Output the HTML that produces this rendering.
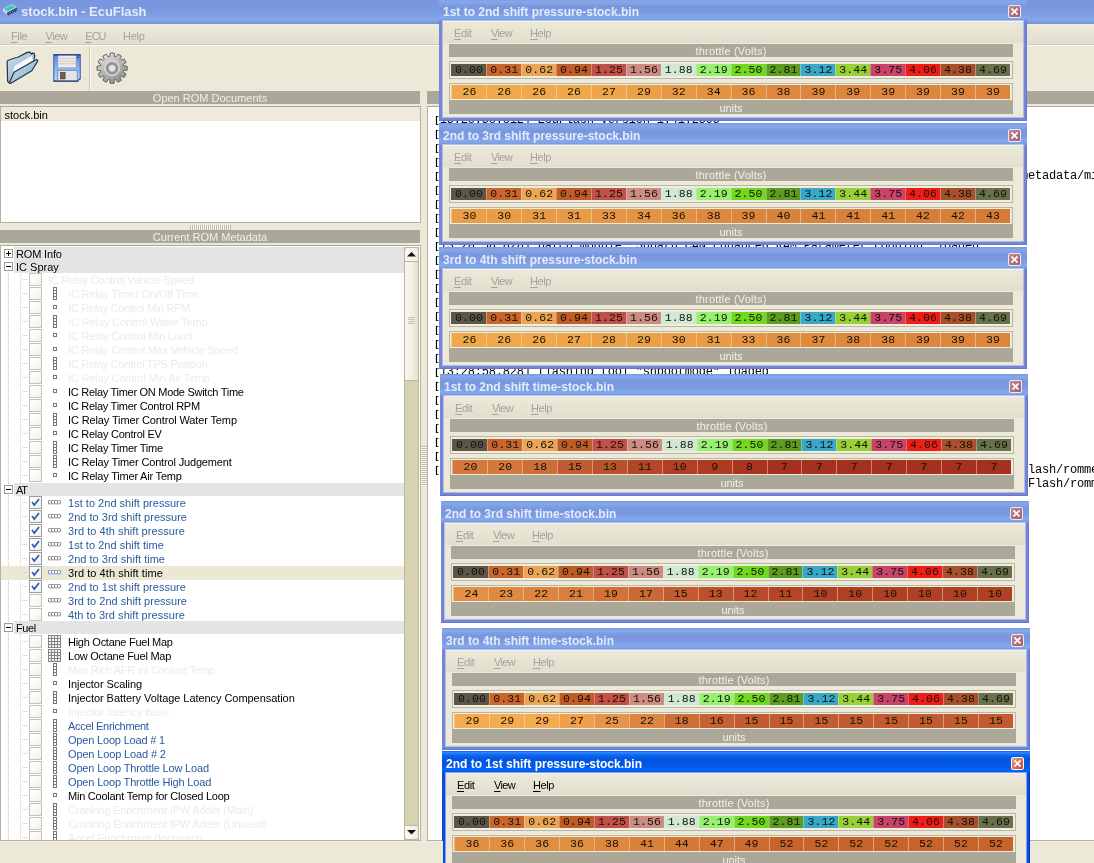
<!DOCTYPE html>
<html><head><meta charset="utf-8"><title>stock.bin - EcuFlash</title>
<style>
html,body{margin:0;padding:0;}
body{width:1094px;height:863px;overflow:hidden;position:relative;background:#ece9d8;font-family:"Liberation Sans",sans-serif;font-size:11px;color:#000;will-change:transform;transform:translateZ(0);}
div,span{position:absolute;box-sizing:border-box;white-space:nowrap;}
.t{line-height:14px;height:14px;}
.hdr{background:#aca899;color:#f1f0ea;text-align:center;font-size:11px;line-height:15px;height:13px;overflow:hidden;}
.mono{font-family:"Liberation Mono",monospace;font-size:11.5px;letter-spacing:0.1px;}
.log{font-family:"Liberation Mono",monospace;font-size:12px;letter-spacing:-0.2px;}
.br{font-style:normal;font-weight:bold;display:inline-block;width:6.8px;font-size:9px;letter-spacing:0;text-indent:1.2px;vertical-align:0.3px;}
/* tree */
.cat{left:14px;width:390px;height:12.5px;background:#e4e4e4;}
.cat span{left:2px;top:0;line-height:15px;height:13px;}
.pm{left:4px;width:9px;height:9px;border:1px solid #9c9c94;background:#fff;}
.pm i{position:absolute;left:1px;top:3px;width:5px;height:1px;background:#000;}
.pm b{position:absolute;left:3px;top:1px;width:1px;height:5px;background:#000;}
.cb{left:29px;width:13px;height:13px;border:1px solid #c6c3b2;background:linear-gradient(135deg,#fdfdfb 30%,#f1f0e8);}
.it{left:67px;line-height:14px;height:14px;}
.g{color:#ebebeb;}
.bl{color:#2a5aa0;}
.ic{left:48px;width:14px;height:14px;}
/* child windows */
.win{width:588px;height:121.5px;background:#7586d8;border-right:1px solid #6878cf;border-bottom:1px solid #6878cf;}
.win .tb{left:0;top:0;width:588px;height:22px;background:linear-gradient(180deg,#7697e7 0,#7c9ce3 4%,#86a6e6 9%,#88a8e6 13%,#80a2e4 20%,#7c9fe2 26%,#7996de 36%,#7b99e1 60%,#82a9e9 82%,#80a5e7 90%,#7b96e1 95%,#7a93df 100%);}
.win .ttl{left:4px;top:5px;font-weight:bold;font-size:12px;line-height:16px;color:#e3ebfa;}
.win .cl{left:4px;top:22px;width:580px;height:96px;background:#ece9d8;outline:1px solid rgba(225,231,250,0.55);}
.win .mb{left:0;top:0;width:580px;height:22px;background:linear-gradient(180deg,#ece9d8 0,#e1decd 100%);border-top:1px solid #f4f4f6;}
.win .mi{top:5px;line-height:14px;color:#a6a399;}
.win .mi u{text-decoration:underline;text-decoration-thickness:1px;text-underline-offset:1.5px;}
.win.act .mi{color:#000;}

.win .h1{left:6px;top:23px;width:564px;letter-spacing:0.2px;}
.win .h2{left:6px;top:79px;width:564px;height:14px;line-height:17px;}
.win .fr{left:6px;width:564px;border:1px solid #b9b6a6;background:#f0eddf;}
.win .c{top:2px;width:35px;height:12px;line-height:12px;text-align:center;color:#141008;overflow:hidden;}
.win .d{top:1px;height:14px;line-height:13px;border-left:1px solid rgba(255,235,200,0.45);}
.win .x{top:6px;width:13px;height:13px;border:1px solid #e8ecf8;border-radius:2px;background:linear-gradient(135deg,#c08a98,#a95a6c);}
.win.act{background:#0a4be0;border-color:#0838c0;}
.win.act .tb{background:linear-gradient(180deg,#0a5ee8 0,#2f86fb 6%,#1f78f6 12%,#0b62ea 22%,#0355e0 40%,#0358e6 70%,#0664f6 88%,#0459e8 95%,#0347d6 100%);}
.win.act .ttl{color:#fff;}
.win.act .x{background:linear-gradient(135deg,#e8a08c,#c8452c);border-color:#fff;}
</style></head><body>

<div style="left:0;top:0;width:1094px;height:24px;background:linear-gradient(180deg,#7896de 0,#7a98e0 30%,#7b9ae2 55%,#82a8e9 80%,#80a5e7 88%,#7b98e1 94%,#7a90d8 100%);"></div>
<svg style="position:absolute;left:0px;top:0px" width="20" height="20" viewBox="0 0 20 20">
<polygon points="2.8,8.8 7.2,12.4 7.2,13.8 2.8,10.2" fill="#e4e9ee"/>
<polygon points="7.2,12.4 17.2,7.3 17.2,8.7 7.2,13.8" fill="#39424e"/>
<polygon points="2.8,8.8 12,4 17.2,7.3 7.2,12.4" fill="#c2cfd4"/>
<polygon points="4.6,8.7 12,4.9 15.4,7.2 7.4,11.3" fill="#2fd0c8"/>
<path d="M7.7,14.7 L17,9.9" stroke="#131a30" stroke-width="1.9" stroke-dasharray="1.1 0.9"/>
<path d="M3.2,11 L6.6,13.8" stroke="#dfe5ea" stroke-width="1.2" stroke-dasharray="0.9 0.9"/>
</svg>
<span style="left:21px;top:3px;font-weight:bold;font-size:13px;line-height:17px;color:#e4ecfb;letter-spacing:-0.046px;" id="mt">stock.bin - EcuFlash</span>
<div style="left:0;top:24px;width:1094px;height:20px;background:linear-gradient(180deg,#f2f3ea 0,#ece9d9 6%,#e2dfcf 100%);"></div><div style="left:0;top:44px;width:1094px;height:1px;background:#cdcabb;"></div><div style="left:0;top:45px;width:1094px;height:1px;background:#fbfaf2;"></div>
<span id="m_File" class="t" style="left:11.0px;top:29px;color:#a5a296;letter-spacing:-0.388px;"><u style="text-decoration:underline;text-decoration-thickness:1px;text-underline-offset:1.5px">F</u>ile</span>
<span id="m_View" class="t" style="left:45.5px;top:29px;color:#a5a296;letter-spacing:-0.464px;"><u style="text-decoration:underline;text-decoration-thickness:1px;text-underline-offset:1.5px">V</u>iew</span>
<span id="m_ECU" class="t" style="left:85.3px;top:29px;color:#a5a296;letter-spacing:-1.011px;"><u style="text-decoration:underline;text-decoration-thickness:1px;text-underline-offset:1.5px">E</u>CU</span>
<span id="m_Help" class="t" style="left:122.9px;top:29px;color:#a5a296;letter-spacing:-0.206px;">Help</span>
<div style="left:0;top:46px;width:1094px;height:45px;background:#ece9d8;"></div>
<div style="left:89px;top:46px;width:1px;height:44px;background:#c9c6b5;"></div><div style="left:90px;top:46px;width:1px;height:44px;background:#fbfaf6;"></div>
<svg style="position:absolute;left:5px;top:50px" width="36" height="36" viewBox="5 50 36 36">
<defs><linearGradient id="fg" x1="0" y1="0" x2="1" y2="1"><stop offset="0" stop-color="#d4e6f4"/><stop offset="1" stop-color="#77a6cd"/></linearGradient>
<linearGradient id="fb" x1="0" y1="0" x2="1" y2="1"><stop offset="0" stop-color="#cfe2f0"/><stop offset="1" stop-color="#7fa8cb"/></linearGradient></defs>
<path d="M7.6,81.6 L7.2,61.6 Q7.3,60.5 8.3,60.2 L14.7,58 L17.4,57.5 L27.2,52.4 L30,52.2 L31.3,54 L32.7,53.1 L34.1,53.3 L34.8,55.9 L33.7,60.5 L12,80 L9.6,83 Z" fill="url(#fb)" stroke="#2b343c" stroke-width="1.2" stroke-linejoin="round"/>
<path d="M12.4,75.5 L14,66.1 L31.8,55.6 L33.7,60.5 L14,72.6 Z" fill="#f6f8fb" stroke="#b4bec8" stroke-width="0.5"/>
<path d="M9.3,83 L14,72.3 L36.4,59.4 Q37.6,59.6 37.8,61 L31.8,70.7 L10.5,83.4 Z" fill="url(#fg)" stroke="#2b343c" stroke-width="1.2" stroke-linejoin="round"/>
</svg>
<svg style="position:absolute;left:53px;top:54px" width="28" height="28" viewBox="0 0 28 28">
<defs><linearGradient id="fl" x1="0" y1="0" x2="0" y2="1"><stop offset="0" stop-color="#5f86df"/><stop offset="0.5" stop-color="#86b0ee"/><stop offset="1" stop-color="#b4d8f8"/></linearGradient></defs>
<path d="M0.7,0.7 H27.3 V24.8 L24.8,27.3 H0.7 Z" fill="url(#fl)" stroke="#4a68c4" stroke-width="1.1"/>
<path d="M0.7,27 H24.8 L27.3,24.6" fill="none" stroke="#20262e" stroke-width="1.2"/>
<path d="M0.5,0.9 H27.5" stroke="#343c9a" stroke-width="1.6"/>
<rect x="5" y="1.8" width="18" height="11.8" fill="#eceeee" stroke="#9aa4ba" stroke-width="0.5"/>
<path d="M5.5,4.6H22.5M5.5,7.2H22.5M5.5,9.8H22.5" stroke="#d8b7a8" stroke-width="0.8"/>
<rect x="4.8" y="16.4" width="19.4" height="10" fill="#e2e4ea" stroke="#5a6a8a" stroke-width="0.6"/>
<rect x="7.5" y="18.5" width="4.6" height="6.4" fill="#7a5a4c" stroke="#3a3038" stroke-width="0.6"/>
<rect x="24.4" y="2.4" width="1.4" height="2" fill="#24428a"/>
<polygon points="25,27.3 27.3,25 27.3,27.3" fill="#ece9d8"/>
</svg>
<svg style="position:absolute;left:95px;top:51px" width="34" height="34" viewBox="-0.1 -0.2 34 34">
<defs><linearGradient id="gg" x1="0.2" y1="0" x2="0.8" y2="1"><stop offset="0" stop-color="#e4e4e4"/><stop offset="0.5" stop-color="#b4b4b4"/><stop offset="1" stop-color="#8c8c8c"/></linearGradient></defs>
<path d="M32.07,15.02 L32.07,18.98 L28.46,19.37 L28.11,20.67 L31.04,22.82 L29.06,26.25 L25.74,24.78 L24.78,25.74 L26.25,29.06 L22.82,31.04 L20.67,28.11 L19.37,28.46 L18.98,32.07 L15.02,32.07 L14.63,28.46 L13.33,28.11 L11.18,31.04 L7.75,29.06 L9.22,25.74 L8.26,24.78 L4.94,26.25 L2.96,22.82 L5.89,20.67 L5.54,19.37 L1.93,18.98 L1.93,15.02 L5.54,14.63 L5.89,13.33 L2.96,11.18 L4.94,7.75 L8.26,9.22 L9.22,8.26 L7.75,4.94 L11.18,2.96 L13.33,5.89 L14.63,5.54 L15.02,1.93 L18.98,1.93 L19.37,5.54 L20.67,5.89 L22.82,2.96 L26.25,4.94 L24.78,8.26 L25.74,9.22 L29.06,7.75 L31.04,11.18 L28.11,13.33 L28.46,14.63 Z" fill="url(#gg)" stroke="#626262" stroke-width="1" stroke-linejoin="round"/>
<circle cx="17" cy="17" r="7.2" fill="#9c9c9c" stroke="#dadada" stroke-width="1.5"/>
<circle cx="17" cy="17" r="4.6" fill="none" stroke="#8c8c8c" stroke-width="1"/>
<circle cx="17" cy="17" r="3.3" fill="#e9e7dc" stroke="#c8c8c8" stroke-width="0.8"/>
</svg>
<div class="hdr" id="h_open" style="left:0;top:91px;width:420px;">Open ROM Documents</div>
<div style="left:0;top:106px;width:421px;height:117px;border:1px solid #b5b2a3;border-top-color:#aca899;background:#fff;"></div>
<div style="left:1px;top:107px;width:419px;height:14px;background:#eeebdb;"></div>
<span class="t" id="sb" style="left:4.5px;top:108px;">stock.bin</span>
<div style="left:190px;top:224.5px;width:41px;height:5px;background:repeating-linear-gradient(90deg,#bcb9a9 0,#bcb9a9 1px,#fbfaf6 1px,#fbfaf6 2px);"></div>
<div class="hdr" id="h_cur" style="left:0;top:230px;width:420px;">Current ROM Metadata</div>
<div style="left:0;top:245px;width:421px;height:596px;border:1px solid #b5b2a3;border-top-color:#aca899;background:#fff;overflow:hidden;" id="tree">
<div style="left:7px;top:27px;width:1px;height:570px;background:repeating-linear-gradient(180deg,#c4c4c4 0,#c4c4c4 1px,transparent 1px,transparent 2px);"></div>
<div style="left:19px;top:28px;width:1px;height:570px;background:repeating-linear-gradient(180deg,#cfcfcf 0,#cfcfcf 1px,transparent 1px,transparent 2px);"></div>
<div class="cat" style="left:13px;top:1.0px;"><span id="c0" style="letter-spacing:-0.160px;">ROM Info</span></div>
<div class="pm" style="left:3px;top:3px;"><i></i><b></b></div>
<div class="cat" style="left:13px;top:14.0px;"><span id="c1" style="">IC Spray</span></div>
<div class="pm" style="left:3px;top:16px;"><i></i></div>
<div style="left:21px;top:33px;width:5px;height:1px;background:repeating-linear-gradient(90deg,#c8c8c8 0,#c8c8c8 1px,transparent 1px,transparent 2px);"></div>
<div class="cb" style="left:28px;top:27px;"></div>
<span class="it g" id="a0" style="left:47px;top:27px;letter-spacing:-0.263px;">IC Relay Control Vehicle Speed</span>
<div style="left:21px;top:47px;width:5px;height:1px;background:repeating-linear-gradient(90deg,#c8c8c8 0,#c8c8c8 1px,transparent 1px,transparent 2px);"></div>
<div class="cb" style="left:28px;top:41px;"></div>
<svg class="ic" style="position:absolute;left:47px;top:41px" width="14" height="14"><g fill="#fff" stroke="#767676" stroke-width="1"><rect x="5.5" y="0.5" width="3" height="3"/><rect x="5.5" y="3.5" width="3" height="3"/><rect x="5.5" y="6.5" width="3" height="3"/><rect x="5.5" y="9.5" width="3" height="3"/></g></svg>
<span class="it g" id="a1" style="left:67px;top:41px;letter-spacing:-0.138px;">IC Relay Timer On/Off Time</span>
<div style="left:21px;top:61px;width:5px;height:1px;background:repeating-linear-gradient(90deg,#c8c8c8 0,#c8c8c8 1px,transparent 1px,transparent 2px);"></div>
<div class="cb" style="left:28px;top:55px;"></div>
<svg class="ic" style="position:absolute;left:47px;top:55px" width="14" height="14"><rect x="5.5" y="4.5" width="3" height="3" fill="#fff" stroke="#767676" stroke-width="1"/></svg>
<span class="it g" id="a2" style="left:67px;top:55px;letter-spacing:-0.283px;">IC Relay Control Min RPM</span>
<div style="left:21px;top:75px;width:5px;height:1px;background:repeating-linear-gradient(90deg,#c8c8c8 0,#c8c8c8 1px,transparent 1px,transparent 2px);"></div>
<div class="cb" style="left:28px;top:69px;"></div>
<svg class="ic" style="position:absolute;left:47px;top:69px" width="14" height="14"><g fill="#fff" stroke="#767676" stroke-width="1"><rect x="5.5" y="0.5" width="3" height="3"/><rect x="5.5" y="3.5" width="3" height="3"/><rect x="5.5" y="6.5" width="3" height="3"/><rect x="5.5" y="9.5" width="3" height="3"/></g></svg>
<span class="it g" id="a3" style="left:67px;top:69px;letter-spacing:-0.109px;">IC Relay Control Water Temp</span>
<div style="left:21px;top:89px;width:5px;height:1px;background:repeating-linear-gradient(90deg,#c8c8c8 0,#c8c8c8 1px,transparent 1px,transparent 2px);"></div>
<div class="cb" style="left:28px;top:83px;"></div>
<svg class="ic" style="position:absolute;left:47px;top:83px" width="14" height="14"><rect x="5.5" y="4.5" width="3" height="3" fill="#fff" stroke="#767676" stroke-width="1"/></svg>
<span class="it g" id="a4" style="left:67px;top:83px;letter-spacing:-0.217px;">IC Relay Control Min Load</span>
<div style="left:21px;top:103px;width:5px;height:1px;background:repeating-linear-gradient(90deg,#c8c8c8 0,#c8c8c8 1px,transparent 1px,transparent 2px);"></div>
<div class="cb" style="left:28px;top:97px;"></div>
<svg class="ic" style="position:absolute;left:47px;top:97px" width="14" height="14"><rect x="5.5" y="4.5" width="3" height="3" fill="#fff" stroke="#767676" stroke-width="1"/></svg>
<span class="it g" id="a5" style="left:67px;top:97px;letter-spacing:-0.233px;">IC Relay Control Max Vehicle Speed</span>
<div style="left:21px;top:117px;width:5px;height:1px;background:repeating-linear-gradient(90deg,#c8c8c8 0,#c8c8c8 1px,transparent 1px,transparent 2px);"></div>
<div class="cb" style="left:28px;top:111px;"></div>
<svg class="ic" style="position:absolute;left:47px;top:111px" width="14" height="14"><g fill="#fff" stroke="#767676" stroke-width="1"><rect x="5.5" y="0.5" width="3" height="3"/><rect x="5.5" y="3.5" width="3" height="3"/><rect x="5.5" y="6.5" width="3" height="3"/><rect x="5.5" y="9.5" width="3" height="3"/></g></svg>
<span class="it g" id="a6" style="left:67px;top:111px;letter-spacing:-0.263px;">IC Relay Control TPS Position</span>
<div style="left:21px;top:131px;width:5px;height:1px;background:repeating-linear-gradient(90deg,#c8c8c8 0,#c8c8c8 1px,transparent 1px,transparent 2px);"></div>
<div class="cb" style="left:28px;top:125px;"></div>
<svg class="ic" style="position:absolute;left:47px;top:125px" width="14" height="14"><rect x="5.5" y="4.5" width="3" height="3" fill="#fff" stroke="#767676" stroke-width="1"/></svg>
<span class="it g" id="a7" style="left:67px;top:125px;letter-spacing:-0.187px;">IC Relay Control Min Air Temp</span>
<div style="left:21px;top:145px;width:5px;height:1px;background:repeating-linear-gradient(90deg,#c8c8c8 0,#c8c8c8 1px,transparent 1px,transparent 2px);"></div>
<div class="cb" style="left:28px;top:139px;"></div>
<svg class="ic" style="position:absolute;left:47px;top:139px" width="14" height="14"><rect x="5.5" y="4.5" width="3" height="3" fill="#fff" stroke="#767676" stroke-width="1"/></svg>
<span class="it" id="a8" style="left:67px;top:139px;letter-spacing:-0.280px;">IC Relay Timer ON Mode Switch Time</span>
<div style="left:21px;top:159px;width:5px;height:1px;background:repeating-linear-gradient(90deg,#c8c8c8 0,#c8c8c8 1px,transparent 1px,transparent 2px);"></div>
<div class="cb" style="left:28px;top:153px;"></div>
<svg class="ic" style="position:absolute;left:47px;top:153px" width="14" height="14"><rect x="5.5" y="4.5" width="3" height="3" fill="#fff" stroke="#767676" stroke-width="1"/></svg>
<span class="it" id="a9" style="left:67px;top:153px;letter-spacing:-0.268px;">IC Relay Timer Control RPM</span>
<div style="left:21px;top:173px;width:5px;height:1px;background:repeating-linear-gradient(90deg,#c8c8c8 0,#c8c8c8 1px,transparent 1px,transparent 2px);"></div>
<div class="cb" style="left:28px;top:167px;"></div>
<svg class="ic" style="position:absolute;left:47px;top:167px" width="14" height="14"><g fill="#fff" stroke="#767676" stroke-width="1"><rect x="5.5" y="0.5" width="3" height="3"/><rect x="5.5" y="3.5" width="3" height="3"/><rect x="5.5" y="6.5" width="3" height="3"/><rect x="5.5" y="9.5" width="3" height="3"/></g></svg>
<span class="it" id="a10" style="left:67px;top:167px;letter-spacing:-0.124px;">IC Relay Timer Control Water Temp</span>
<div style="left:21px;top:187px;width:5px;height:1px;background:repeating-linear-gradient(90deg,#c8c8c8 0,#c8c8c8 1px,transparent 1px,transparent 2px);"></div>
<div class="cb" style="left:28px;top:181px;"></div>
<svg class="ic" style="position:absolute;left:47px;top:181px" width="14" height="14"><rect x="5.5" y="4.5" width="3" height="3" fill="#fff" stroke="#767676" stroke-width="1"/></svg>
<span class="it" id="a11" style="left:67px;top:181px;letter-spacing:-0.249px;">IC Relay Control EV</span>
<div style="left:21px;top:201px;width:5px;height:1px;background:repeating-linear-gradient(90deg,#c8c8c8 0,#c8c8c8 1px,transparent 1px,transparent 2px);"></div>
<div class="cb" style="left:28px;top:195px;"></div>
<svg class="ic" style="position:absolute;left:47px;top:195px" width="14" height="14"><g fill="#fff" stroke="#767676" stroke-width="1"><rect x="5.5" y="0.5" width="3" height="3"/><rect x="5.5" y="3.5" width="3" height="3"/><rect x="5.5" y="6.5" width="3" height="3"/><rect x="5.5" y="9.5" width="3" height="3"/></g></svg>
<span class="it" id="a12" style="left:67px;top:195px;letter-spacing:-0.255px;">IC Relay Timer Time</span>
<div style="left:21px;top:215px;width:5px;height:1px;background:repeating-linear-gradient(90deg,#c8c8c8 0,#c8c8c8 1px,transparent 1px,transparent 2px);"></div>
<div class="cb" style="left:28px;top:209px;"></div>
<svg class="ic" style="position:absolute;left:47px;top:209px" width="14" height="14"><g fill="#fff" stroke="#767676" stroke-width="1"><rect x="5.5" y="0.5" width="3" height="3"/><rect x="5.5" y="3.5" width="3" height="3"/><rect x="5.5" y="6.5" width="3" height="3"/><rect x="5.5" y="9.5" width="3" height="3"/></g></svg>
<span class="it" id="a13" style="left:67px;top:209px;letter-spacing:-0.160px;">IC Relay Timer Control Judgement</span>
<div style="left:21px;top:229px;width:5px;height:1px;background:repeating-linear-gradient(90deg,#c8c8c8 0,#c8c8c8 1px,transparent 1px,transparent 2px);"></div>
<div class="cb" style="left:28px;top:223px;"></div>
<svg class="ic" style="position:absolute;left:47px;top:223px" width="14" height="14"><rect x="5.5" y="4.5" width="3" height="3" fill="#fff" stroke="#767676" stroke-width="1"/></svg>
<span class="it" id="a14" style="left:67px;top:223px;letter-spacing:-0.204px;">IC Relay Timer Air Temp</span>
<div class="cat" style="left:13px;top:237.0px;"><span id="c2" style="letter-spacing:-1.175px;">AT</span></div>
<div class="pm" style="left:3px;top:239px;"><i></i></div>
<div style="left:21px;top:256px;width:5px;height:1px;background:repeating-linear-gradient(90deg,#c8c8c8 0,#c8c8c8 1px,transparent 1px,transparent 2px);"></div>
<div class="cb" style="left:28px;top:250px;border-color:#9b9b9b;"><svg style="position:absolute;left:1px;top:1px" width="9" height="9" viewBox="0 0 9 9"><path d="M1,4 L3.3,7 L8,1" fill="none" stroke="#2c5bb6" stroke-width="1.7"/></svg></div>
<svg class="ic" style="position:absolute;left:47px;top:250px" width="14" height="14"><g fill="#fff" stroke="#7e7e7e" stroke-width="1"><rect x="0.5" y="4.5" width="3" height="3.4" rx="0.8"/><rect x="3.5" y="4.5" width="3" height="3.4" rx="0.8"/><rect x="6.5" y="4.5" width="3" height="3.4" rx="0.8"/><rect x="9.5" y="4.5" width="3" height="3.4" rx="0.8"/></g></svg>
<span class="it bl" id="b0" style="left:67px;top:250px;letter-spacing:0.020px;">1st to 2nd shift pressure</span>
<div style="left:21px;top:270px;width:5px;height:1px;background:repeating-linear-gradient(90deg,#c8c8c8 0,#c8c8c8 1px,transparent 1px,transparent 2px);"></div>
<div class="cb" style="left:28px;top:264px;border-color:#9b9b9b;"><svg style="position:absolute;left:1px;top:1px" width="9" height="9" viewBox="0 0 9 9"><path d="M1,4 L3.3,7 L8,1" fill="none" stroke="#2c5bb6" stroke-width="1.7"/></svg></div>
<svg class="ic" style="position:absolute;left:47px;top:264px" width="14" height="14"><g fill="#fff" stroke="#7e7e7e" stroke-width="1"><rect x="0.5" y="4.5" width="3" height="3.4" rx="0.8"/><rect x="3.5" y="4.5" width="3" height="3.4" rx="0.8"/><rect x="6.5" y="4.5" width="3" height="3.4" rx="0.8"/><rect x="9.5" y="4.5" width="3" height="3.4" rx="0.8"/></g></svg>
<span class="it bl" id="b1" style="left:67px;top:264px;letter-spacing:0.015px;">2nd to 3rd shift pressure</span>
<div style="left:21px;top:284px;width:5px;height:1px;background:repeating-linear-gradient(90deg,#c8c8c8 0,#c8c8c8 1px,transparent 1px,transparent 2px);"></div>
<div class="cb" style="left:28px;top:278px;border-color:#9b9b9b;"><svg style="position:absolute;left:1px;top:1px" width="9" height="9" viewBox="0 0 9 9"><path d="M1,4 L3.3,7 L8,1" fill="none" stroke="#2c5bb6" stroke-width="1.7"/></svg></div>
<svg class="ic" style="position:absolute;left:47px;top:278px" width="14" height="14"><g fill="#fff" stroke="#7e7e7e" stroke-width="1"><rect x="0.5" y="4.5" width="3" height="3.4" rx="0.8"/><rect x="3.5" y="4.5" width="3" height="3.4" rx="0.8"/><rect x="6.5" y="4.5" width="3" height="3.4" rx="0.8"/><rect x="9.5" y="4.5" width="3" height="3.4" rx="0.8"/></g></svg>
<span class="it bl" id="b2" style="left:67px;top:278px;letter-spacing:0.050px;">3rd to 4th shift pressure</span>
<div style="left:21px;top:298px;width:5px;height:1px;background:repeating-linear-gradient(90deg,#c8c8c8 0,#c8c8c8 1px,transparent 1px,transparent 2px);"></div>
<div class="cb" style="left:28px;top:292px;border-color:#9b9b9b;"><svg style="position:absolute;left:1px;top:1px" width="9" height="9" viewBox="0 0 9 9"><path d="M1,4 L3.3,7 L8,1" fill="none" stroke="#2c5bb6" stroke-width="1.7"/></svg></div>
<svg class="ic" style="position:absolute;left:47px;top:292px" width="14" height="14"><g fill="#fff" stroke="#7e7e7e" stroke-width="1"><rect x="0.5" y="4.5" width="3" height="3.4" rx="0.8"/><rect x="3.5" y="4.5" width="3" height="3.4" rx="0.8"/><rect x="6.5" y="4.5" width="3" height="3.4" rx="0.8"/><rect x="9.5" y="4.5" width="3" height="3.4" rx="0.8"/></g></svg>
<span class="it bl" id="b3" style="left:67px;top:292px;letter-spacing:0.024px;">1st to 2nd shift time</span>
<div style="left:21px;top:312px;width:5px;height:1px;background:repeating-linear-gradient(90deg,#c8c8c8 0,#c8c8c8 1px,transparent 1px,transparent 2px);"></div>
<div class="cb" style="left:28px;top:306px;border-color:#9b9b9b;"><svg style="position:absolute;left:1px;top:1px" width="9" height="9" viewBox="0 0 9 9"><path d="M1,4 L3.3,7 L8,1" fill="none" stroke="#2c5bb6" stroke-width="1.7"/></svg></div>
<svg class="ic" style="position:absolute;left:47px;top:306px" width="14" height="14"><g fill="#fff" stroke="#7e7e7e" stroke-width="1"><rect x="0.5" y="4.5" width="3" height="3.4" rx="0.8"/><rect x="3.5" y="4.5" width="3" height="3.4" rx="0.8"/><rect x="6.5" y="4.5" width="3" height="3.4" rx="0.8"/><rect x="9.5" y="4.5" width="3" height="3.4" rx="0.8"/></g></svg>
<span class="it bl" id="b4" style="left:67px;top:306px;letter-spacing:0.019px;">2nd to 3rd shift time</span>
<div style="left:0px;top:320px;width:403px;height:14px;background:#ebe8d6;"></div>
<div style="left:21px;top:326px;width:5px;height:1px;background:repeating-linear-gradient(90deg,#c8c8c8 0,#c8c8c8 1px,transparent 1px,transparent 2px);"></div>
<div class="cb" style="left:28px;top:320px;border-color:#9b9b9b;"><svg style="position:absolute;left:1px;top:1px" width="9" height="9" viewBox="0 0 9 9"><path d="M1,4 L3.3,7 L8,1" fill="none" stroke="#2c5bb6" stroke-width="1.7"/></svg></div>
<svg class="ic" style="position:absolute;left:47px;top:320px" width="14" height="14"><g fill="#fff" stroke="#6f87c8" stroke-width="1"><rect x="0.5" y="4.5" width="3" height="3.4" rx="0.8"/><rect x="3.5" y="4.5" width="3" height="3.4" rx="0.8"/><rect x="6.5" y="4.5" width="3" height="3.4" rx="0.8"/><rect x="9.5" y="4.5" width="3" height="3.4" rx="0.8"/></g></svg>
<span class="it" id="b5" style="left:67px;top:320px;letter-spacing:0.060px;">3rd to 4th shift time</span>
<div style="left:21px;top:340px;width:5px;height:1px;background:repeating-linear-gradient(90deg,#c8c8c8 0,#c8c8c8 1px,transparent 1px,transparent 2px);"></div>
<div class="cb" style="left:28px;top:334px;border-color:#9b9b9b;"><svg style="position:absolute;left:1px;top:1px" width="9" height="9" viewBox="0 0 9 9"><path d="M1,4 L3.3,7 L8,1" fill="none" stroke="#2c5bb6" stroke-width="1.7"/></svg></div>
<svg class="ic" style="position:absolute;left:47px;top:334px" width="14" height="14"><g fill="#fff" stroke="#7e7e7e" stroke-width="1"><rect x="0.5" y="4.5" width="3" height="3.4" rx="0.8"/><rect x="3.5" y="4.5" width="3" height="3.4" rx="0.8"/><rect x="6.5" y="4.5" width="3" height="3.4" rx="0.8"/><rect x="9.5" y="4.5" width="3" height="3.4" rx="0.8"/></g></svg>
<span class="it bl" id="b6" style="left:67px;top:334px;letter-spacing:0.020px;">2nd to 1st shift pressure</span>
<div style="left:21px;top:354px;width:5px;height:1px;background:repeating-linear-gradient(90deg,#c8c8c8 0,#c8c8c8 1px,transparent 1px,transparent 2px);"></div>
<div class="cb" style="left:28px;top:348px;"></div>
<svg class="ic" style="position:absolute;left:47px;top:348px" width="14" height="14"><g fill="#fff" stroke="#7e7e7e" stroke-width="1"><rect x="0.5" y="4.5" width="3" height="3.4" rx="0.8"/><rect x="3.5" y="4.5" width="3" height="3.4" rx="0.8"/><rect x="6.5" y="4.5" width="3" height="3.4" rx="0.8"/><rect x="9.5" y="4.5" width="3" height="3.4" rx="0.8"/></g></svg>
<span class="it bl" id="b7" style="left:67px;top:348px;letter-spacing:0.015px;">3rd to 2nd shift pressure</span>
<div style="left:21px;top:368px;width:5px;height:1px;background:repeating-linear-gradient(90deg,#c8c8c8 0,#c8c8c8 1px,transparent 1px,transparent 2px);"></div>
<div class="cb" style="left:28px;top:362px;"></div>
<svg class="ic" style="position:absolute;left:47px;top:362px" width="14" height="14"><g fill="#fff" stroke="#7e7e7e" stroke-width="1"><rect x="0.5" y="4.5" width="3" height="3.4" rx="0.8"/><rect x="3.5" y="4.5" width="3" height="3.4" rx="0.8"/><rect x="6.5" y="4.5" width="3" height="3.4" rx="0.8"/><rect x="9.5" y="4.5" width="3" height="3.4" rx="0.8"/></g></svg>
<span class="it bl" id="b8" style="left:67px;top:362px;letter-spacing:0.050px;">4th to 3rd shift pressure</span>
<div class="cat" style="left:13px;top:375.0px;"><span id="c3" style="letter-spacing:-0.427px;">Fuel</span></div>
<div class="pm" style="left:3px;top:377px;"><i></i></div>
<div style="left:21px;top:395px;width:5px;height:1px;background:repeating-linear-gradient(90deg,#c8c8c8 0,#c8c8c8 1px,transparent 1px,transparent 2px);"></div>
<div class="cb" style="left:28px;top:389px;"></div>
<svg class="ic" style="position:absolute;left:47px;top:389px" width="14" height="14"><rect x="0.5" y="0.5" width="12" height="12" fill="#f6f6f6" stroke="#848484"/><path d="M3.5,0.5v12M6.5,0.5v12M9.5,0.5v12M0.5,3.5h12M0.5,6.5h12M0.5,9.5h12" stroke="#848484" stroke-width="1"/></svg>
<span class="it" id="f0" style="left:67px;top:389px;letter-spacing:-0.268px;">High Octane Fuel Map</span>
<div style="left:21px;top:409px;width:5px;height:1px;background:repeating-linear-gradient(90deg,#c8c8c8 0,#c8c8c8 1px,transparent 1px,transparent 2px);"></div>
<div class="cb" style="left:28px;top:403px;"></div>
<svg class="ic" style="position:absolute;left:47px;top:403px" width="14" height="14"><rect x="0.5" y="0.5" width="12" height="12" fill="#f6f6f6" stroke="#848484"/><path d="M3.5,0.5v12M6.5,0.5v12M9.5,0.5v12M0.5,3.5h12M0.5,6.5h12M0.5,9.5h12" stroke="#848484" stroke-width="1"/></svg>
<span class="it" id="f1" style="left:67px;top:403px;letter-spacing:-0.238px;">Low Octane Fuel Map</span>
<div style="left:21px;top:423px;width:5px;height:1px;background:repeating-linear-gradient(90deg,#c8c8c8 0,#c8c8c8 1px,transparent 1px,transparent 2px);"></div>
<div class="cb" style="left:28px;top:417px;"></div>
<svg class="ic" style="position:absolute;left:47px;top:417px" width="14" height="14"><g fill="#fff" stroke="#767676" stroke-width="1"><rect x="5.5" y="0.5" width="3" height="3"/><rect x="5.5" y="3.5" width="3" height="3"/><rect x="5.5" y="6.5" width="3" height="3"/><rect x="5.5" y="9.5" width="3" height="3"/></g></svg>
<span class="it g" id="f2" style="left:67px;top:417px;letter-spacing:-0.281px;">Max Rich AFR vs Coolant Temp</span>
<div style="left:21px;top:437px;width:5px;height:1px;background:repeating-linear-gradient(90deg,#c8c8c8 0,#c8c8c8 1px,transparent 1px,transparent 2px);"></div>
<div class="cb" style="left:28px;top:431px;"></div>
<svg class="ic" style="position:absolute;left:47px;top:431px" width="14" height="14"><rect x="5.5" y="4.5" width="3" height="3" fill="#fff" stroke="#767676" stroke-width="1"/></svg>
<span class="it" id="f3" style="left:67px;top:431px;letter-spacing:-0.076px;">Injector Scaling</span>
<div style="left:21px;top:451px;width:5px;height:1px;background:repeating-linear-gradient(90deg,#c8c8c8 0,#c8c8c8 1px,transparent 1px,transparent 2px);"></div>
<div class="cb" style="left:28px;top:445px;"></div>
<svg class="ic" style="position:absolute;left:47px;top:445px" width="14" height="14"><g fill="#fff" stroke="#767676" stroke-width="1"><rect x="5.5" y="0.5" width="3" height="3"/><rect x="5.5" y="3.5" width="3" height="3"/><rect x="5.5" y="6.5" width="3" height="3"/><rect x="5.5" y="9.5" width="3" height="3"/></g></svg>
<span class="it" id="f4" style="left:67px;top:445px;letter-spacing:-0.058px;">Injector Battery Voltage Latency Compensation</span>
<div style="left:21px;top:465px;width:5px;height:1px;background:repeating-linear-gradient(90deg,#c8c8c8 0,#c8c8c8 1px,transparent 1px,transparent 2px);"></div>
<div class="cb" style="left:28px;top:459px;"></div>
<svg class="ic" style="position:absolute;left:47px;top:459px" width="14" height="14"><rect x="5.5" y="4.5" width="3" height="3" fill="#fff" stroke="#767676" stroke-width="1"/></svg>
<span class="it g" id="f5" style="left:67px;top:459px;letter-spacing:0.039px;">Injector latency base</span>
<div style="left:21px;top:479px;width:5px;height:1px;background:repeating-linear-gradient(90deg,#c8c8c8 0,#c8c8c8 1px,transparent 1px,transparent 2px);"></div>
<div class="cb" style="left:28px;top:473px;"></div>
<svg class="ic" style="position:absolute;left:47px;top:473px" width="14" height="14"><g fill="#fff" stroke="#767676" stroke-width="1"><rect x="5.5" y="0.5" width="3" height="3"/><rect x="5.5" y="3.5" width="3" height="3"/><rect x="5.5" y="6.5" width="3" height="3"/><rect x="5.5" y="9.5" width="3" height="3"/></g></svg>
<span class="it bl" id="f6" style="left:67px;top:473px;letter-spacing:-0.312px;">Accel Enrichment</span>
<div style="left:21px;top:493px;width:5px;height:1px;background:repeating-linear-gradient(90deg,#c8c8c8 0,#c8c8c8 1px,transparent 1px,transparent 2px);"></div>
<div class="cb" style="left:28px;top:487px;"></div>
<svg class="ic" style="position:absolute;left:47px;top:487px" width="14" height="14"><g fill="#fff" stroke="#767676" stroke-width="1"><rect x="5.5" y="0.5" width="3" height="3"/><rect x="5.5" y="3.5" width="3" height="3"/><rect x="5.5" y="6.5" width="3" height="3"/><rect x="5.5" y="9.5" width="3" height="3"/></g></svg>
<span class="it bl" id="f7" style="left:67px;top:487px;letter-spacing:-0.184px;">Open Loop Load # 1</span>
<div style="left:21px;top:507px;width:5px;height:1px;background:repeating-linear-gradient(90deg,#c8c8c8 0,#c8c8c8 1px,transparent 1px,transparent 2px);"></div>
<div class="cb" style="left:28px;top:501px;"></div>
<svg class="ic" style="position:absolute;left:47px;top:501px" width="14" height="14"><g fill="#fff" stroke="#767676" stroke-width="1"><rect x="5.5" y="0.5" width="3" height="3"/><rect x="5.5" y="3.5" width="3" height="3"/><rect x="5.5" y="6.5" width="3" height="3"/><rect x="5.5" y="9.5" width="3" height="3"/></g></svg>
<span class="it bl" id="f8" style="left:67px;top:501px;letter-spacing:-0.140px;">Open Loop Load # 2</span>
<div style="left:21px;top:521px;width:5px;height:1px;background:repeating-linear-gradient(90deg,#c8c8c8 0,#c8c8c8 1px,transparent 1px,transparent 2px);"></div>
<div class="cb" style="left:28px;top:515px;"></div>
<svg class="ic" style="position:absolute;left:47px;top:515px" width="14" height="14"><g fill="#fff" stroke="#767676" stroke-width="1"><rect x="5.5" y="0.5" width="3" height="3"/><rect x="5.5" y="3.5" width="3" height="3"/><rect x="5.5" y="6.5" width="3" height="3"/><rect x="5.5" y="9.5" width="3" height="3"/></g></svg>
<span class="it bl" id="f9" style="left:67px;top:515px;letter-spacing:-0.165px;">Open Loop Throttle Low Load</span>
<div style="left:21px;top:535px;width:5px;height:1px;background:repeating-linear-gradient(90deg,#c8c8c8 0,#c8c8c8 1px,transparent 1px,transparent 2px);"></div>
<div class="cb" style="left:28px;top:529px;"></div>
<svg class="ic" style="position:absolute;left:47px;top:529px" width="14" height="14"><g fill="#fff" stroke="#767676" stroke-width="1"><rect x="5.5" y="0.5" width="3" height="3"/><rect x="5.5" y="3.5" width="3" height="3"/><rect x="5.5" y="6.5" width="3" height="3"/><rect x="5.5" y="9.5" width="3" height="3"/></g></svg>
<span class="it bl" id="f10" style="left:67px;top:529px;letter-spacing:-0.168px;">Open Loop Throttle High Load</span>
<div style="left:21px;top:549px;width:5px;height:1px;background:repeating-linear-gradient(90deg,#c8c8c8 0,#c8c8c8 1px,transparent 1px,transparent 2px);"></div>
<div class="cb" style="left:28px;top:543px;"></div>
<svg class="ic" style="position:absolute;left:47px;top:543px" width="14" height="14"><rect x="5.5" y="4.5" width="3" height="3" fill="#fff" stroke="#767676" stroke-width="1"/></svg>
<span class="it" id="f11" style="left:67px;top:543px;letter-spacing:-0.240px;">Min Coolant Temp for Closed Loop</span>
<div style="left:21px;top:563px;width:5px;height:1px;background:repeating-linear-gradient(90deg,#c8c8c8 0,#c8c8c8 1px,transparent 1px,transparent 2px);"></div>
<div class="cb" style="left:28px;top:557px;"></div>
<svg class="ic" style="position:absolute;left:47px;top:557px" width="14" height="14"><g fill="#fff" stroke="#767676" stroke-width="1"><rect x="5.5" y="0.5" width="3" height="3"/><rect x="5.5" y="3.5" width="3" height="3"/><rect x="5.5" y="6.5" width="3" height="3"/><rect x="5.5" y="9.5" width="3" height="3"/></g></svg>
<span class="it g" id="f12" style="left:67px;top:557px;letter-spacing:-0.202px;">Cranking Enrichment IPW Adder (Main)</span>
<div style="left:21px;top:577px;width:5px;height:1px;background:repeating-linear-gradient(90deg,#c8c8c8 0,#c8c8c8 1px,transparent 1px,transparent 2px);"></div>
<div class="cb" style="left:28px;top:571px;"></div>
<svg class="ic" style="position:absolute;left:47px;top:571px" width="14" height="14"><g fill="#fff" stroke="#767676" stroke-width="1"><rect x="5.5" y="0.5" width="3" height="3"/><rect x="5.5" y="3.5" width="3" height="3"/><rect x="5.5" y="6.5" width="3" height="3"/><rect x="5.5" y="9.5" width="3" height="3"/></g></svg>
<span class="it g" id="f13" style="left:67px;top:571px;letter-spacing:-0.201px;">Cranking Enrichment IPW Adder (Unused)</span>
<div style="left:21px;top:591px;width:5px;height:1px;background:repeating-linear-gradient(90deg,#c8c8c8 0,#c8c8c8 1px,transparent 1px,transparent 2px);"></div>
<div class="cb" style="left:28px;top:585px;"></div>
<svg class="ic" style="position:absolute;left:47px;top:585px" width="14" height="14"><g fill="#fff" stroke="#767676" stroke-width="1"><rect x="5.5" y="0.5" width="3" height="3"/><rect x="5.5" y="3.5" width="3" height="3"/><rect x="5.5" y="6.5" width="3" height="3"/><rect x="5.5" y="9.5" width="3" height="3"/></g></svg>
<span class="it g" id="f14" style="left:67px;top:585px;letter-spacing:-0.138px;">Accel Enrichment (Incorrect)</span>
<div style="left:403px;top:1px;width:15px;height:593px;background:#d6d2b2;border-left:1px solid #bdb99f;border-right:1px solid #bdb99f;"></div>
<div style="left:403px;top:15px;width:15px;height:120px;border:1px solid #b9b59a;background:linear-gradient(90deg,#f8f7ef 0,#f3f1e4 50%,#e4e1cd 100%);"></div>
<div style="left:407px;top:71px;width:7px;height:1px;background:#c9c5ac;"></div>
<div style="left:407px;top:73px;width:7px;height:1px;background:#c9c5ac;"></div>
<div style="left:407px;top:75px;width:7px;height:1px;background:#c9c5ac;"></div>
<div style="left:407px;top:77px;width:7px;height:1px;background:#c9c5ac;"></div>
<div style="left:403px;top:1px;width:15px;height:15px;border:1px solid #b9b59a;border-radius:3px 3px 0 0;background:linear-gradient(90deg,#fbfaf5,#efede0);"></div>
<svg style="position:absolute;left:406px;top:6px" width="9" height="5"><polygon points="0,4.5 4.5,0 9,4.5" fill="#111"/></svg>
<div style="left:403px;top:579px;width:15px;height:15px;border:1px solid #b9b59a;border-radius:0 0 3px 3px;background:linear-gradient(90deg,#fbfaf5,#efede0);"></div>
<svg style="position:absolute;left:406px;top:584px" width="9" height="5"><polygon points="0,0 9,0 4.5,4.5" fill="#111"/></svg>
</div>
<div class="hdr" style="left:427px;top:91px;width:667px;"></div>
<div style="left:427px;top:106px;width:680px;height:735px;border:1px solid #b5b2a3;border-top-color:#aca899;background:#fff;"></div>
<div style="left:421.5px;top:445.5px;width:5px;height:40px;background:repeating-linear-gradient(180deg,#bcb9a9 0,#bcb9a9 1px,#fbfaf6 1px,#fbfaf6 2px);"></div>
<span class="log" style="left:433px;top:113px;line-height:14px;height:14px;color:#000;"><i class="br">[</i>13:28:58.812] EcuFlash Version 1.41.2595</span>
<span class="log" style="left:433px;top:127px;line-height:14px;height:14px;color:#000;"><i class="br">[</i>13:28:58.812] OS Version Windows XP</span>
<span class="log" style="left:433px;top:141px;line-height:14px;height:14px;color:#000;"><i class="br">[</i>13:28:58.812] Qt Version 4.5.0</span>
<span class="log" style="left:433px;top:155px;line-height:14px;height:14px;color:#000;"><i class="br">[</i>13:28:58.812] 26 memory models read</span>
<span class="log" style="left:433px;top:169px;line-height:14px;height:14px;color:#000;"><i class="br">[</i>13:28:58.828] scanning for metadata models in C:/Program Files/OpenECU/EcuFlash/rommetadata/mitsubishi</span>
<span class="log" style="left:433px;top:183px;line-height:14px;height:14px;color:#000;"><i class="br">[</i>13:28:58.828] 408 ROM metadata models read</span>
<span class="log" style="left:433px;top:197px;line-height:14px;height:14px;color:#000;"><i class="br">[</i>13:28:58.828] checksum module &quot;subarudbw&quot; loaded</span>
<span class="log" style="left:433px;top:211px;line-height:14px;height:14px;color:#000;"><i class="br">[</i>13:28:58.828] checksum module &quot;subarudiesel&quot; loaded</span>
<span class="log" style="left:433px;top:225px;line-height:14px;height:14px;color:#000;"><i class="br">[</i>13:28:58.828] checksum module &quot;mitsucan&quot; loaded</span>
<span class="log" style="left:433px;top:239px;line-height:14px;height:14px;color:#000;"><i class="br">[</i>13:28:58.828] patch module &quot;Subaru CAN Enhanced RAM Parameter Logging&quot; loaded</span>
<span class="log" style="left:433px;top:253px;line-height:14px;height:14px;color:#000;"><i class="br">[</i>13:28:58.828] patch module &quot;Mitsu CAN RAM Parameter Logging&quot; loaded</span>
<span class="log" style="left:433px;top:267px;line-height:14px;height:14px;color:#000;"><i class="br">[</i>13:28:58.828] flashing tool &quot;wrx02&quot; loaded</span>
<span class="log" style="left:433px;top:281px;line-height:14px;height:14px;color:#000;"><i class="br">[</i>13:28:58.828] flashing tool &quot;wrx04&quot; loaded</span>
<span class="log" style="left:433px;top:295px;line-height:14px;height:14px;color:#000;"><i class="br">[</i>13:28:58.828] flashing tool &quot;sti04&quot; loaded</span>
<span class="log" style="left:433px;top:309px;line-height:14px;height:14px;color:#000;"><i class="br">[</i>13:28:58.828] flashing tool &quot;sti05&quot; loaded</span>
<span class="log" style="left:433px;top:323px;line-height:14px;height:14px;color:#000;"><i class="br">[</i>13:28:58.828] flashing tool &quot;mitsucan&quot; loaded</span>
<span class="log" style="left:433px;top:337px;line-height:14px;height:14px;color:#000;"><i class="br">[</i>13:28:58.828] flashing tool &quot;mitsukernel&quot; loaded</span>
<span class="log" style="left:433px;top:351px;line-height:14px;height:14px;color:#000;"><i class="br">[</i>13:28:58.828] flashing tool &quot;mitsukernelocp&quot; loaded</span>
<span class="log" style="left:433px;top:365px;line-height:14px;height:14px;color:#000;"><i class="br">[</i>13:28:58.828] flashing tool &quot;shbootmode&quot; loaded</span>
<span class="log" style="left:433px;top:379px;line-height:14px;height:14px;color:#000;"><i class="br">[</i>13:28:58.828] flashing tool &quot;shaudmode&quot; loaded</span>
<span class="log" style="left:433px;top:393px;line-height:14px;height:14px;color:#000;"><i class="br">[</i>13:28:58.828] flashing tool &quot;subarucan&quot; loaded</span>
<span class="log" style="left:433px;top:407px;line-height:14px;height:14px;color:#000;"><i class="br">[</i>13:28:58.828] flashing tool &quot;subarucand&quot; loaded</span>
<span class="log" style="left:433px;top:421px;line-height:14px;height:14px;color:#000;"><i class="br">[</i>13:28:58.828] flashing tool &quot;subarubrz&quot; loaded</span>
<span class="log" style="left:433px;top:435px;line-height:14px;height:14px;color:#000;"><i class="br">[</i>13:28:58.843] flashing tool &quot;subaruhitachi&quot; loaded</span>
<span class="log" style="left:433px;top:449px;line-height:14px;height:14px;color:#000;"><i class="br">[</i>13:28:58.843] J2534 API Version: 04.04</span>
<span class="log" style="left:433px;top:463px;line-height:14px;height:14px;color:#000;"><i class="br">[</i>13:28:58.843] using metadata XML ID 88590015 from file C:/Program Files/OpenECU/EcuFlash/rommetadata/mitsubishi/evo/88590015.xml</span>
<span class="log" style="left:433px;top:477px;line-height:14px;height:14px;color:#000;">&nbsp;13:28:58.843] using metadata XML ID evo7_base from file C:/Program Files/OpenECU/EcuFlash/rommetadata/mitsubishi/evo/evo7base.xml</span>
<div class="win" style="left:439px;top:-1px;">
<div class="tb"></div><span class="ttl" id="w0" style="">1st to 2nd shift pressure-stock.bin</span>
<div class="x" style="left:569px;"><svg style="position:absolute;left:2px;top:2px" width="7" height="7" viewBox="0 0 7 7"><path d="M0.5,0.5L6.5,6.5M6.5,0.5L0.5,6.5" stroke="#fff" stroke-width="1.7"/></svg></div>
<div class="cl"><div class="mb"></div>
<span class="mi" style="left:11px;letter-spacing:-0.35px"><u>E</u>dit</span><span class="mi" style="left:48px;letter-spacing:-0.65px"><u>V</u>iew</span><span class="mi" style="left:87px;letter-spacing:-0.4px"><u>H</u>elp</span>
<div class="hdr h1">throttle (Volts)</div>
<div class="fr" style="top:40px;height:18px;">
<span class="c mono" style="left:1.4px;background:#5c5648;">0.00</span>
<span class="c mono" style="left:36.3px;background:#c8662e;border-left:1px solid rgba(240,237,223,0.35);">0.31</span>
<span class="c mono" style="left:71.2px;background:#eba556;border-left:1px solid rgba(240,237,223,0.35);">0.62</span>
<span class="c mono" style="left:106.1px;background:#c05c28;border-left:1px solid rgba(240,237,223,0.35);">0.94</span>
<span class="c mono" style="left:141.0px;background:#c05048;border-left:1px solid rgba(240,237,223,0.35);">1.25</span>
<span class="c mono" style="left:175.9px;background:#cc8c84;border-left:1px solid rgba(240,237,223,0.35);">1.56</span>
<span class="c mono" style="left:210.8px;background:#d0e8d4;border-left:1px solid rgba(240,237,223,0.35);">1.88</span>
<span class="c mono" style="left:245.7px;background:#98f070;border-left:1px solid rgba(240,237,223,0.35);">2.19</span>
<span class="c mono" style="left:280.6px;background:#70d820;border-left:1px solid rgba(240,237,223,0.35);">2.50</span>
<span class="c mono" style="left:315.5px;background:#5c9c20;border-left:1px solid rgba(240,237,223,0.35);">2.81</span>
<span class="c mono" style="left:350.4px;background:#38a8c8;border-left:1px solid rgba(240,237,223,0.35);">3.12</span>
<span class="c mono" style="left:385.3px;background:#98d038;border-left:1px solid rgba(240,237,223,0.35);">3.44</span>
<span class="c mono" style="left:420.2px;background:#c84468;border-left:1px solid rgba(240,237,223,0.35);">3.75</span>
<span class="c mono" style="left:455.1px;background:#f01c18;border-left:1px solid rgba(240,237,223,0.35);">4.06</span>
<span class="c mono" style="left:490.0px;background:#a8502c;border-left:1px solid rgba(240,237,223,0.35);">4.38</span>
<span class="c mono" style="left:524.9px;background:#68704c;border-left:1px solid rgba(240,237,223,0.35);">4.69</span>
</div>
<div class="fr" style="top:62px;height:17px;border-bottom:none;">
<span class="c d mono" style="left:1.4px;background:#f0a84c;">26</span>
<span class="c d mono" style="left:36.3px;background:#f0a84c;">26</span>
<span class="c d mono" style="left:71.2px;background:#f0a84c;">26</span>
<span class="c d mono" style="left:106.1px;background:#f0a84c;">26</span>
<span class="c d mono" style="left:141.0px;background:#eea54a;">27</span>
<span class="c d mono" style="left:175.9px;background:#eba048;">29</span>
<span class="c d mono" style="left:210.8px;background:#e69844;">32</span>
<span class="c d mono" style="left:245.7px;background:#e39342;">34</span>
<span class="c d mono" style="left:280.6px;background:#e08e40;">36</span>
<span class="c d mono" style="left:315.5px;background:#dd883d;">38</span>
<span class="c d mono" style="left:350.4px;background:#db863c;">39</span>
<span class="c d mono" style="left:385.3px;background:#db863c;">39</span>
<span class="c d mono" style="left:420.2px;background:#db863c;">39</span>
<span class="c d mono" style="left:455.1px;background:#db863c;">39</span>
<span class="c d mono" style="left:490.0px;background:#db863c;">39</span>
<span class="c d mono" style="left:524.9px;background:#db863c;">39</span>
</div>
<div class="hdr h2">units</div>
</div></div>
<div class="win" style="left:439px;top:123px;">
<div class="tb"></div><span class="ttl" id="w1" style="">2nd to 3rd shift pressure-stock.bin</span>
<div class="x" style="left:569px;"><svg style="position:absolute;left:2px;top:2px" width="7" height="7" viewBox="0 0 7 7"><path d="M0.5,0.5L6.5,6.5M6.5,0.5L0.5,6.5" stroke="#fff" stroke-width="1.7"/></svg></div>
<div class="cl"><div class="mb"></div>
<span class="mi" style="left:11px;letter-spacing:-0.35px"><u>E</u>dit</span><span class="mi" style="left:48px;letter-spacing:-0.65px"><u>V</u>iew</span><span class="mi" style="left:87px;letter-spacing:-0.4px"><u>H</u>elp</span>
<div class="hdr h1">throttle (Volts)</div>
<div class="fr" style="top:40px;height:18px;">
<span class="c mono" style="left:1.4px;background:#5c5648;">0.00</span>
<span class="c mono" style="left:36.3px;background:#c8662e;border-left:1px solid rgba(240,237,223,0.35);">0.31</span>
<span class="c mono" style="left:71.2px;background:#eba556;border-left:1px solid rgba(240,237,223,0.35);">0.62</span>
<span class="c mono" style="left:106.1px;background:#c05c28;border-left:1px solid rgba(240,237,223,0.35);">0.94</span>
<span class="c mono" style="left:141.0px;background:#c05048;border-left:1px solid rgba(240,237,223,0.35);">1.25</span>
<span class="c mono" style="left:175.9px;background:#cc8c84;border-left:1px solid rgba(240,237,223,0.35);">1.56</span>
<span class="c mono" style="left:210.8px;background:#d0e8d4;border-left:1px solid rgba(240,237,223,0.35);">1.88</span>
<span class="c mono" style="left:245.7px;background:#98f070;border-left:1px solid rgba(240,237,223,0.35);">2.19</span>
<span class="c mono" style="left:280.6px;background:#70d820;border-left:1px solid rgba(240,237,223,0.35);">2.50</span>
<span class="c mono" style="left:315.5px;background:#5c9c20;border-left:1px solid rgba(240,237,223,0.35);">2.81</span>
<span class="c mono" style="left:350.4px;background:#38a8c8;border-left:1px solid rgba(240,237,223,0.35);">3.12</span>
<span class="c mono" style="left:385.3px;background:#98d038;border-left:1px solid rgba(240,237,223,0.35);">3.44</span>
<span class="c mono" style="left:420.2px;background:#c84468;border-left:1px solid rgba(240,237,223,0.35);">3.75</span>
<span class="c mono" style="left:455.1px;background:#f01c18;border-left:1px solid rgba(240,237,223,0.35);">4.06</span>
<span class="c mono" style="left:490.0px;background:#a8502c;border-left:1px solid rgba(240,237,223,0.35);">4.38</span>
<span class="c mono" style="left:524.9px;background:#68704c;border-left:1px solid rgba(240,237,223,0.35);">4.69</span>
</div>
<div class="fr" style="top:62px;height:17px;border-bottom:none;">
<span class="c d mono" style="left:1.4px;background:#e99d47;">30</span>
<span class="c d mono" style="left:36.3px;background:#e99d47;">30</span>
<span class="c d mono" style="left:71.2px;background:#e89b46;">31</span>
<span class="c d mono" style="left:106.1px;background:#e89b46;">31</span>
<span class="c d mono" style="left:141.0px;background:#e59543;">33</span>
<span class="c d mono" style="left:175.9px;background:#e39342;">34</span>
<span class="c d mono" style="left:210.8px;background:#e08e40;">36</span>
<span class="c d mono" style="left:245.7px;background:#dd883d;">38</span>
<span class="c d mono" style="left:280.6px;background:#db863c;">39</span>
<span class="c d mono" style="left:315.5px;background:#da833b;">40</span>
<span class="c d mono" style="left:350.4px;background:#d8813a;">41</span>
<span class="c d mono" style="left:385.3px;background:#d8813a;">41</span>
<span class="c d mono" style="left:420.2px;background:#d8813a;">41</span>
<span class="c d mono" style="left:455.1px;background:#d77e38;">42</span>
<span class="c d mono" style="left:490.0px;background:#d77e38;">42</span>
<span class="c d mono" style="left:524.9px;background:#d57b37;">43</span>
</div>
<div class="hdr h2">units</div>
</div></div>
<div class="win" style="left:439px;top:247px;">
<div class="tb"></div><span class="ttl" id="w2" style="">3rd to 4th shift pressure-stock.bin</span>
<div class="x" style="left:569px;"><svg style="position:absolute;left:2px;top:2px" width="7" height="7" viewBox="0 0 7 7"><path d="M0.5,0.5L6.5,6.5M6.5,0.5L0.5,6.5" stroke="#fff" stroke-width="1.7"/></svg></div>
<div class="cl"><div class="mb"></div>
<span class="mi" style="left:11px;letter-spacing:-0.35px"><u>E</u>dit</span><span class="mi" style="left:48px;letter-spacing:-0.65px"><u>V</u>iew</span><span class="mi" style="left:87px;letter-spacing:-0.4px"><u>H</u>elp</span>
<div class="hdr h1">throttle (Volts)</div>
<div class="fr" style="top:40px;height:18px;">
<span class="c mono" style="left:1.4px;background:#5c5648;">0.00</span>
<span class="c mono" style="left:36.3px;background:#c8662e;border-left:1px solid rgba(240,237,223,0.35);">0.31</span>
<span class="c mono" style="left:71.2px;background:#eba556;border-left:1px solid rgba(240,237,223,0.35);">0.62</span>
<span class="c mono" style="left:106.1px;background:#c05c28;border-left:1px solid rgba(240,237,223,0.35);">0.94</span>
<span class="c mono" style="left:141.0px;background:#c05048;border-left:1px solid rgba(240,237,223,0.35);">1.25</span>
<span class="c mono" style="left:175.9px;background:#cc8c84;border-left:1px solid rgba(240,237,223,0.35);">1.56</span>
<span class="c mono" style="left:210.8px;background:#d0e8d4;border-left:1px solid rgba(240,237,223,0.35);">1.88</span>
<span class="c mono" style="left:245.7px;background:#98f070;border-left:1px solid rgba(240,237,223,0.35);">2.19</span>
<span class="c mono" style="left:280.6px;background:#70d820;border-left:1px solid rgba(240,237,223,0.35);">2.50</span>
<span class="c mono" style="left:315.5px;background:#5c9c20;border-left:1px solid rgba(240,237,223,0.35);">2.81</span>
<span class="c mono" style="left:350.4px;background:#38a8c8;border-left:1px solid rgba(240,237,223,0.35);">3.12</span>
<span class="c mono" style="left:385.3px;background:#98d038;border-left:1px solid rgba(240,237,223,0.35);">3.44</span>
<span class="c mono" style="left:420.2px;background:#c84468;border-left:1px solid rgba(240,237,223,0.35);">3.75</span>
<span class="c mono" style="left:455.1px;background:#f01c18;border-left:1px solid rgba(240,237,223,0.35);">4.06</span>
<span class="c mono" style="left:490.0px;background:#a8502c;border-left:1px solid rgba(240,237,223,0.35);">4.38</span>
<span class="c mono" style="left:524.9px;background:#68704c;border-left:1px solid rgba(240,237,223,0.35);">4.69</span>
</div>
<div class="fr" style="top:62px;height:17px;border-bottom:none;">
<span class="c d mono" style="left:1.4px;background:#f0a84c;">26</span>
<span class="c d mono" style="left:36.3px;background:#f0a84c;">26</span>
<span class="c d mono" style="left:71.2px;background:#f0a84c;">26</span>
<span class="c d mono" style="left:106.1px;background:#eea54a;">27</span>
<span class="c d mono" style="left:141.0px;background:#eca249;">28</span>
<span class="c d mono" style="left:175.9px;background:#eba048;">29</span>
<span class="c d mono" style="left:210.8px;background:#e99d47;">30</span>
<span class="c d mono" style="left:245.7px;background:#e89b46;">31</span>
<span class="c d mono" style="left:280.6px;background:#e59543;">33</span>
<span class="c d mono" style="left:315.5px;background:#e08e40;">36</span>
<span class="c d mono" style="left:350.4px;background:#df8b3e;">37</span>
<span class="c d mono" style="left:385.3px;background:#dd883d;">38</span>
<span class="c d mono" style="left:420.2px;background:#dd883d;">38</span>
<span class="c d mono" style="left:455.1px;background:#db863c;">39</span>
<span class="c d mono" style="left:490.0px;background:#db863c;">39</span>
<span class="c d mono" style="left:524.9px;background:#db863c;">39</span>
</div>
<div class="hdr h2">units</div>
</div></div>
<div class="win" style="left:440px;top:374px;">
<div class="tb"></div><span class="ttl" id="w3" style="">1st to 2nd shift time-stock.bin</span>
<div class="x" style="left:569px;"><svg style="position:absolute;left:2px;top:2px" width="7" height="7" viewBox="0 0 7 7"><path d="M0.5,0.5L6.5,6.5M6.5,0.5L0.5,6.5" stroke="#fff" stroke-width="1.7"/></svg></div>
<div class="cl"><div class="mb"></div>
<span class="mi" style="left:11px;letter-spacing:-0.35px"><u>E</u>dit</span><span class="mi" style="left:48px;letter-spacing:-0.65px"><u>V</u>iew</span><span class="mi" style="left:87px;letter-spacing:-0.4px"><u>H</u>elp</span>
<div class="hdr h1">throttle (Volts)</div>
<div class="fr" style="top:40px;height:18px;">
<span class="c mono" style="left:1.4px;background:#5c5648;">0.00</span>
<span class="c mono" style="left:36.3px;background:#c8662e;border-left:1px solid rgba(240,237,223,0.35);">0.31</span>
<span class="c mono" style="left:71.2px;background:#eba556;border-left:1px solid rgba(240,237,223,0.35);">0.62</span>
<span class="c mono" style="left:106.1px;background:#c05c28;border-left:1px solid rgba(240,237,223,0.35);">0.94</span>
<span class="c mono" style="left:141.0px;background:#c05048;border-left:1px solid rgba(240,237,223,0.35);">1.25</span>
<span class="c mono" style="left:175.9px;background:#cc8c84;border-left:1px solid rgba(240,237,223,0.35);">1.56</span>
<span class="c mono" style="left:210.8px;background:#d0e8d4;border-left:1px solid rgba(240,237,223,0.35);">1.88</span>
<span class="c mono" style="left:245.7px;background:#98f070;border-left:1px solid rgba(240,237,223,0.35);">2.19</span>
<span class="c mono" style="left:280.6px;background:#70d820;border-left:1px solid rgba(240,237,223,0.35);">2.50</span>
<span class="c mono" style="left:315.5px;background:#5c9c20;border-left:1px solid rgba(240,237,223,0.35);">2.81</span>
<span class="c mono" style="left:350.4px;background:#38a8c8;border-left:1px solid rgba(240,237,223,0.35);">3.12</span>
<span class="c mono" style="left:385.3px;background:#98d038;border-left:1px solid rgba(240,237,223,0.35);">3.44</span>
<span class="c mono" style="left:420.2px;background:#c84468;border-left:1px solid rgba(240,237,223,0.35);">3.75</span>
<span class="c mono" style="left:455.1px;background:#f01c18;border-left:1px solid rgba(240,237,223,0.35);">4.06</span>
<span class="c mono" style="left:490.0px;background:#a8502c;border-left:1px solid rgba(240,237,223,0.35);">4.38</span>
<span class="c mono" style="left:524.9px;background:#68704c;border-left:1px solid rgba(240,237,223,0.35);">4.69</span>
</div>
<div class="fr" style="top:62px;height:17px;border-bottom:none;">
<span class="c d mono" style="left:1.4px;background:#d4783b;">20</span>
<span class="c d mono" style="left:36.3px;background:#d4783b;">20</span>
<span class="c d mono" style="left:71.2px;background:#cd6d37;">18</span>
<span class="c d mono" style="left:106.1px;background:#c25c30;">15</span>
<span class="c d mono" style="left:141.0px;background:#bb512b;">13</span>
<span class="c d mono" style="left:175.9px;background:#b44627;">11</span>
<span class="c d mono" style="left:210.8px;background:#b04024;">10</span>
<span class="c d mono" style="left:245.7px;background:#ad3b22;">9</span>
<span class="c d mono" style="left:280.6px;background:#a93520;">8</span>
<span class="c d mono" style="left:315.5px;background:#a6301e;">7</span>
<span class="c d mono" style="left:350.4px;background:#a6301e;">7</span>
<span class="c d mono" style="left:385.3px;background:#a6301e;">7</span>
<span class="c d mono" style="left:420.2px;background:#a6301e;">7</span>
<span class="c d mono" style="left:455.1px;background:#a6301e;">7</span>
<span class="c d mono" style="left:490.0px;background:#a6301e;">7</span>
<span class="c d mono" style="left:524.9px;background:#a6301e;">7</span>
</div>
<div class="hdr h2">units</div>
</div></div>
<div class="win" style="left:441px;top:501px;">
<div class="tb"></div><span class="ttl" id="w4" style="">2nd to 3rd shift time-stock.bin</span>
<div class="x" style="left:569px;"><svg style="position:absolute;left:2px;top:2px" width="7" height="7" viewBox="0 0 7 7"><path d="M0.5,0.5L6.5,6.5M6.5,0.5L0.5,6.5" stroke="#fff" stroke-width="1.7"/></svg></div>
<div class="cl"><div class="mb"></div>
<span class="mi" style="left:11px;letter-spacing:-0.35px"><u>E</u>dit</span><span class="mi" style="left:48px;letter-spacing:-0.65px"><u>V</u>iew</span><span class="mi" style="left:87px;letter-spacing:-0.4px"><u>H</u>elp</span>
<div class="hdr h1">throttle (Volts)</div>
<div class="fr" style="top:40px;height:18px;">
<span class="c mono" style="left:1.4px;background:#5c5648;">0.00</span>
<span class="c mono" style="left:36.3px;background:#c8662e;border-left:1px solid rgba(240,237,223,0.35);">0.31</span>
<span class="c mono" style="left:71.2px;background:#eba556;border-left:1px solid rgba(240,237,223,0.35);">0.62</span>
<span class="c mono" style="left:106.1px;background:#c05c28;border-left:1px solid rgba(240,237,223,0.35);">0.94</span>
<span class="c mono" style="left:141.0px;background:#c05048;border-left:1px solid rgba(240,237,223,0.35);">1.25</span>
<span class="c mono" style="left:175.9px;background:#cc8c84;border-left:1px solid rgba(240,237,223,0.35);">1.56</span>
<span class="c mono" style="left:210.8px;background:#d0e8d4;border-left:1px solid rgba(240,237,223,0.35);">1.88</span>
<span class="c mono" style="left:245.7px;background:#98f070;border-left:1px solid rgba(240,237,223,0.35);">2.19</span>
<span class="c mono" style="left:280.6px;background:#70d820;border-left:1px solid rgba(240,237,223,0.35);">2.50</span>
<span class="c mono" style="left:315.5px;background:#5c9c20;border-left:1px solid rgba(240,237,223,0.35);">2.81</span>
<span class="c mono" style="left:350.4px;background:#38a8c8;border-left:1px solid rgba(240,237,223,0.35);">3.12</span>
<span class="c mono" style="left:385.3px;background:#98d038;border-left:1px solid rgba(240,237,223,0.35);">3.44</span>
<span class="c mono" style="left:420.2px;background:#c84468;border-left:1px solid rgba(240,237,223,0.35);">3.75</span>
<span class="c mono" style="left:455.1px;background:#f01c18;border-left:1px solid rgba(240,237,223,0.35);">4.06</span>
<span class="c mono" style="left:490.0px;background:#a8502c;border-left:1px solid rgba(240,237,223,0.35);">4.38</span>
<span class="c mono" style="left:524.9px;background:#68704c;border-left:1px solid rgba(240,237,223,0.35);">4.69</span>
</div>
<div class="fr" style="top:62px;height:17px;border-bottom:none;">
<span class="c d mono" style="left:1.4px;background:#e38f45;">24</span>
<span class="c d mono" style="left:36.3px;background:#df8942;">23</span>
<span class="c d mono" style="left:71.2px;background:#dc8440;">22</span>
<span class="c d mono" style="left:106.1px;background:#d87e3e;">21</span>
<span class="c d mono" style="left:141.0px;background:#d17339;">19</span>
<span class="c d mono" style="left:175.9px;background:#ca6835;">17</span>
<span class="c d mono" style="left:210.8px;background:#c25c30;">15</span>
<span class="c d mono" style="left:245.7px;background:#bb512b;">13</span>
<span class="c d mono" style="left:280.6px;background:#b84c29;">12</span>
<span class="c d mono" style="left:315.5px;background:#b44627;">11</span>
<span class="c d mono" style="left:350.4px;background:#b04024;">10</span>
<span class="c d mono" style="left:385.3px;background:#b04024;">10</span>
<span class="c d mono" style="left:420.2px;background:#b04024;">10</span>
<span class="c d mono" style="left:455.1px;background:#b04024;">10</span>
<span class="c d mono" style="left:490.0px;background:#b04024;">10</span>
<span class="c d mono" style="left:524.9px;background:#b04024;">10</span>
</div>
<div class="hdr h2">units</div>
</div></div>
<div class="win" style="left:442px;top:628px;">
<div class="tb"></div><span class="ttl" id="w5" style="">3rd to 4th shift time-stock.bin</span>
<div class="x" style="left:569px;"><svg style="position:absolute;left:2px;top:2px" width="7" height="7" viewBox="0 0 7 7"><path d="M0.5,0.5L6.5,6.5M6.5,0.5L0.5,6.5" stroke="#fff" stroke-width="1.7"/></svg></div>
<div class="cl"><div class="mb"></div>
<span class="mi" style="left:11px;letter-spacing:-0.35px"><u>E</u>dit</span><span class="mi" style="left:48px;letter-spacing:-0.65px"><u>V</u>iew</span><span class="mi" style="left:87px;letter-spacing:-0.4px"><u>H</u>elp</span>
<div class="hdr h1">throttle (Volts)</div>
<div class="fr" style="top:40px;height:18px;">
<span class="c mono" style="left:1.4px;background:#5c5648;">0.00</span>
<span class="c mono" style="left:36.3px;background:#c8662e;border-left:1px solid rgba(240,237,223,0.35);">0.31</span>
<span class="c mono" style="left:71.2px;background:#eba556;border-left:1px solid rgba(240,237,223,0.35);">0.62</span>
<span class="c mono" style="left:106.1px;background:#c05c28;border-left:1px solid rgba(240,237,223,0.35);">0.94</span>
<span class="c mono" style="left:141.0px;background:#c05048;border-left:1px solid rgba(240,237,223,0.35);">1.25</span>
<span class="c mono" style="left:175.9px;background:#cc8c84;border-left:1px solid rgba(240,237,223,0.35);">1.56</span>
<span class="c mono" style="left:210.8px;background:#d0e8d4;border-left:1px solid rgba(240,237,223,0.35);">1.88</span>
<span class="c mono" style="left:245.7px;background:#98f070;border-left:1px solid rgba(240,237,223,0.35);">2.19</span>
<span class="c mono" style="left:280.6px;background:#70d820;border-left:1px solid rgba(240,237,223,0.35);">2.50</span>
<span class="c mono" style="left:315.5px;background:#5c9c20;border-left:1px solid rgba(240,237,223,0.35);">2.81</span>
<span class="c mono" style="left:350.4px;background:#38a8c8;border-left:1px solid rgba(240,237,223,0.35);">3.12</span>
<span class="c mono" style="left:385.3px;background:#98d038;border-left:1px solid rgba(240,237,223,0.35);">3.44</span>
<span class="c mono" style="left:420.2px;background:#c84468;border-left:1px solid rgba(240,237,223,0.35);">3.75</span>
<span class="c mono" style="left:455.1px;background:#f01c18;border-left:1px solid rgba(240,237,223,0.35);">4.06</span>
<span class="c mono" style="left:490.0px;background:#a8502c;border-left:1px solid rgba(240,237,223,0.35);">4.38</span>
<span class="c mono" style="left:524.9px;background:#68704c;border-left:1px solid rgba(240,237,223,0.35);">4.69</span>
</div>
<div class="fr" style="top:62px;height:17px;border-bottom:none;">
<span class="c d mono" style="left:1.4px;background:#f5ab50;">29</span>
<span class="c d mono" style="left:36.3px;background:#f5ab50;">29</span>
<span class="c d mono" style="left:71.2px;background:#f5ab50;">29</span>
<span class="c d mono" style="left:106.1px;background:#eea04c;">27</span>
<span class="c d mono" style="left:141.0px;background:#e69447;">25</span>
<span class="c d mono" style="left:175.9px;background:#dc8440;">22</span>
<span class="c d mono" style="left:210.8px;background:#cd6d37;">18</span>
<span class="c d mono" style="left:245.7px;background:#c66232;">16</span>
<span class="c d mono" style="left:280.6px;background:#c25c30;">15</span>
<span class="c d mono" style="left:315.5px;background:#c25c30;">15</span>
<span class="c d mono" style="left:350.4px;background:#c25c30;">15</span>
<span class="c d mono" style="left:385.3px;background:#c25c30;">15</span>
<span class="c d mono" style="left:420.2px;background:#c25c30;">15</span>
<span class="c d mono" style="left:455.1px;background:#c25c30;">15</span>
<span class="c d mono" style="left:490.0px;background:#c25c30;">15</span>
<span class="c d mono" style="left:524.9px;background:#c25c30;">15</span>
</div>
<div class="hdr h2">units</div>
</div></div>
<div class="win act" style="left:442px;top:751px;">
<div class="tb"></div><span class="ttl" id="w6" style="">2nd to 1st shift pressure-stock.bin</span>
<div class="x" style="left:569px;"><svg style="position:absolute;left:2px;top:2px" width="7" height="7" viewBox="0 0 7 7"><path d="M0.5,0.5L6.5,6.5M6.5,0.5L0.5,6.5" stroke="#fff" stroke-width="1.7"/></svg></div>
<div class="cl"><div class="mb"></div>
<span class="mi" style="left:11px;letter-spacing:-0.35px"><u>E</u>dit</span><span class="mi" style="left:48px;letter-spacing:-0.65px"><u>V</u>iew</span><span class="mi" style="left:87px;letter-spacing:-0.4px"><u>H</u>elp</span>
<div class="hdr h1">throttle (Volts)</div>
<div class="fr" style="top:40px;height:18px;">
<span class="c mono" style="left:1.4px;background:#5c5648;">0.00</span>
<span class="c mono" style="left:36.3px;background:#c8662e;border-left:1px solid rgba(240,237,223,0.35);">0.31</span>
<span class="c mono" style="left:71.2px;background:#eba556;border-left:1px solid rgba(240,237,223,0.35);">0.62</span>
<span class="c mono" style="left:106.1px;background:#c05c28;border-left:1px solid rgba(240,237,223,0.35);">0.94</span>
<span class="c mono" style="left:141.0px;background:#c05048;border-left:1px solid rgba(240,237,223,0.35);">1.25</span>
<span class="c mono" style="left:175.9px;background:#cc8c84;border-left:1px solid rgba(240,237,223,0.35);">1.56</span>
<span class="c mono" style="left:210.8px;background:#d0e8d4;border-left:1px solid rgba(240,237,223,0.35);">1.88</span>
<span class="c mono" style="left:245.7px;background:#98f070;border-left:1px solid rgba(240,237,223,0.35);">2.19</span>
<span class="c mono" style="left:280.6px;background:#70d820;border-left:1px solid rgba(240,237,223,0.35);">2.50</span>
<span class="c mono" style="left:315.5px;background:#5c9c20;border-left:1px solid rgba(240,237,223,0.35);">2.81</span>
<span class="c mono" style="left:350.4px;background:#38a8c8;border-left:1px solid rgba(240,237,223,0.35);">3.12</span>
<span class="c mono" style="left:385.3px;background:#98d038;border-left:1px solid rgba(240,237,223,0.35);">3.44</span>
<span class="c mono" style="left:420.2px;background:#c84468;border-left:1px solid rgba(240,237,223,0.35);">3.75</span>
<span class="c mono" style="left:455.1px;background:#f01c18;border-left:1px solid rgba(240,237,223,0.35);">4.06</span>
<span class="c mono" style="left:490.0px;background:#a8502c;border-left:1px solid rgba(240,237,223,0.35);">4.38</span>
<span class="c mono" style="left:524.9px;background:#68704c;border-left:1px solid rgba(240,237,223,0.35);">4.69</span>
</div>
<div class="fr" style="top:62px;height:17px;border-bottom:none;">
<span class="c d mono" style="left:1.4px;background:#e08e40;">36</span>
<span class="c d mono" style="left:36.3px;background:#e08e40;">36</span>
<span class="c d mono" style="left:71.2px;background:#e08e40;">36</span>
<span class="c d mono" style="left:106.1px;background:#e08e40;">36</span>
<span class="c d mono" style="left:141.0px;background:#dd883d;">38</span>
<span class="c d mono" style="left:175.9px;background:#d8813a;">41</span>
<span class="c d mono" style="left:210.8px;background:#d47936;">44</span>
<span class="c d mono" style="left:245.7px;background:#cf7132;">47</span>
<span class="c d mono" style="left:280.6px;background:#cc6c30;">49</span>
<span class="c d mono" style="left:315.5px;background:#c7642c;">52</span>
<span class="c d mono" style="left:350.4px;background:#c7642c;">52</span>
<span class="c d mono" style="left:385.3px;background:#c7642c;">52</span>
<span class="c d mono" style="left:420.2px;background:#c7642c;">52</span>
<span class="c d mono" style="left:455.1px;background:#c7642c;">52</span>
<span class="c d mono" style="left:490.0px;background:#c7642c;">52</span>
<span class="c d mono" style="left:524.9px;background:#c7642c;">52</span>
</div>
<div class="hdr h2">units</div>
</div></div>
<div style="left:0;top:841px;width:443px;height:22px;background:#ece9d8;"></div>
</body></html>
